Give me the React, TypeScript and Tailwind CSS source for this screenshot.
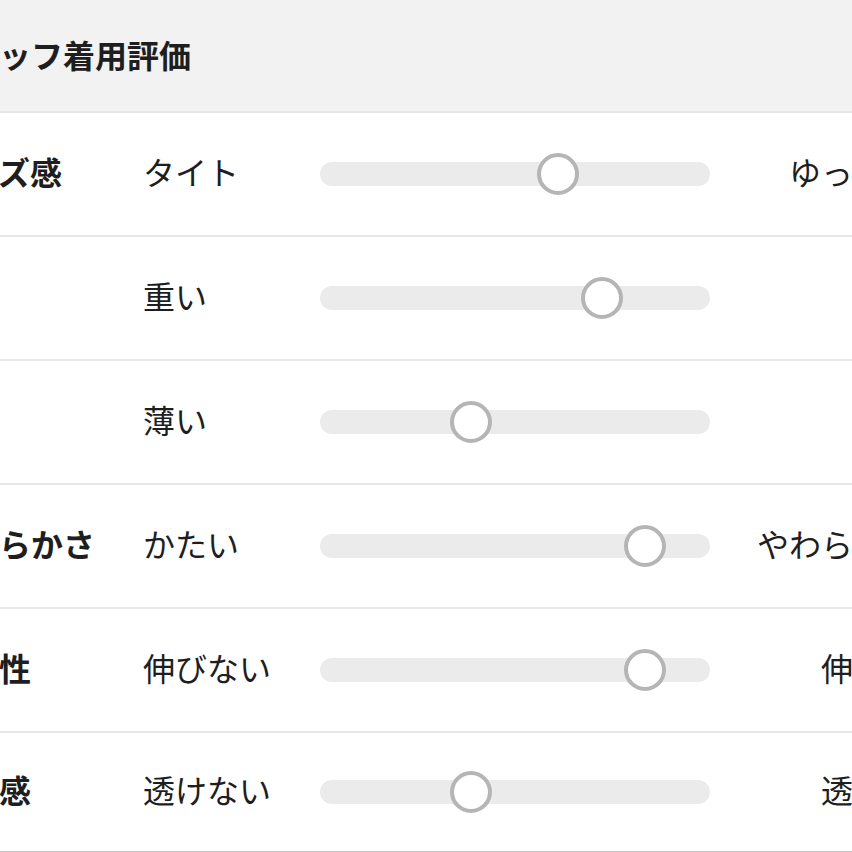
import React from "react";

const rows = [
  { label: "サイズ感", min: "タイト", max: "ゆったり", pos: 238 },
  { label: "重さ", min: "重い", max: "軽い", pos: 282 },
  { label: "厚さ", min: "薄い", max: "厚い", pos: 151 },
  { label: "やわらかさ", min: "かたい", max: "やわらかい", pos: 325 },
  { label: "伸縮性", min: "伸びない", max: "伸びる", pos: 325 },
  { label: "透け感", min: "透けない", max: "透ける", pos: 151 },
];

export default function App() {
  return (
    <div
      className="w-[852px] h-[852px] overflow-hidden bg-white text-[#1e1e1e]"
      style={{ fontFamily: '"Noto Sans CJK JP", "Noto Sans", sans-serif' }}
    >
      <div className="ml-[-65px] w-[982px]">
        <div className="h-[113px] bg-[#f2f2f2] border-b-2 border-[#e6e6e6] flex items-center">
          <div className="text-[32px] font-bold leading-none pb-[4px]">スタッフ着用評価</div>
        </div>
        {rows.map((r, i) => (
          <div
            key={i}
            className={`flex items-center border-b-2 ${
              i === rows.length - 1 ? "h-[120px] border-[#c4c4c4]" : "h-[124px] border-[#e8e8e8]"
            }`}
          >
            <div className="w-[208px] text-[32px] font-bold leading-none pb-[6px]">{r.label}</div>
            <div className="w-[177px] text-[32px] leading-none pb-[6px]">{r.min}</div>
            <div className="w-[390px] relative h-[24px] rounded-full bg-[#ebebeb]">
              <div
                className="absolute top-1/2 w-[42px] h-[42px] -translate-x-1/2 -translate-y-1/2 rounded-full bg-white border-[4px] border-[#b5b5b5]"
                style={{ left: r.pos }}
              />
            </div>
            <div className="flex-1 text-right text-[32px] leading-none pb-[6px]">{r.max}</div>
          </div>
        ))}
      </div>
    </div>
  );
}
